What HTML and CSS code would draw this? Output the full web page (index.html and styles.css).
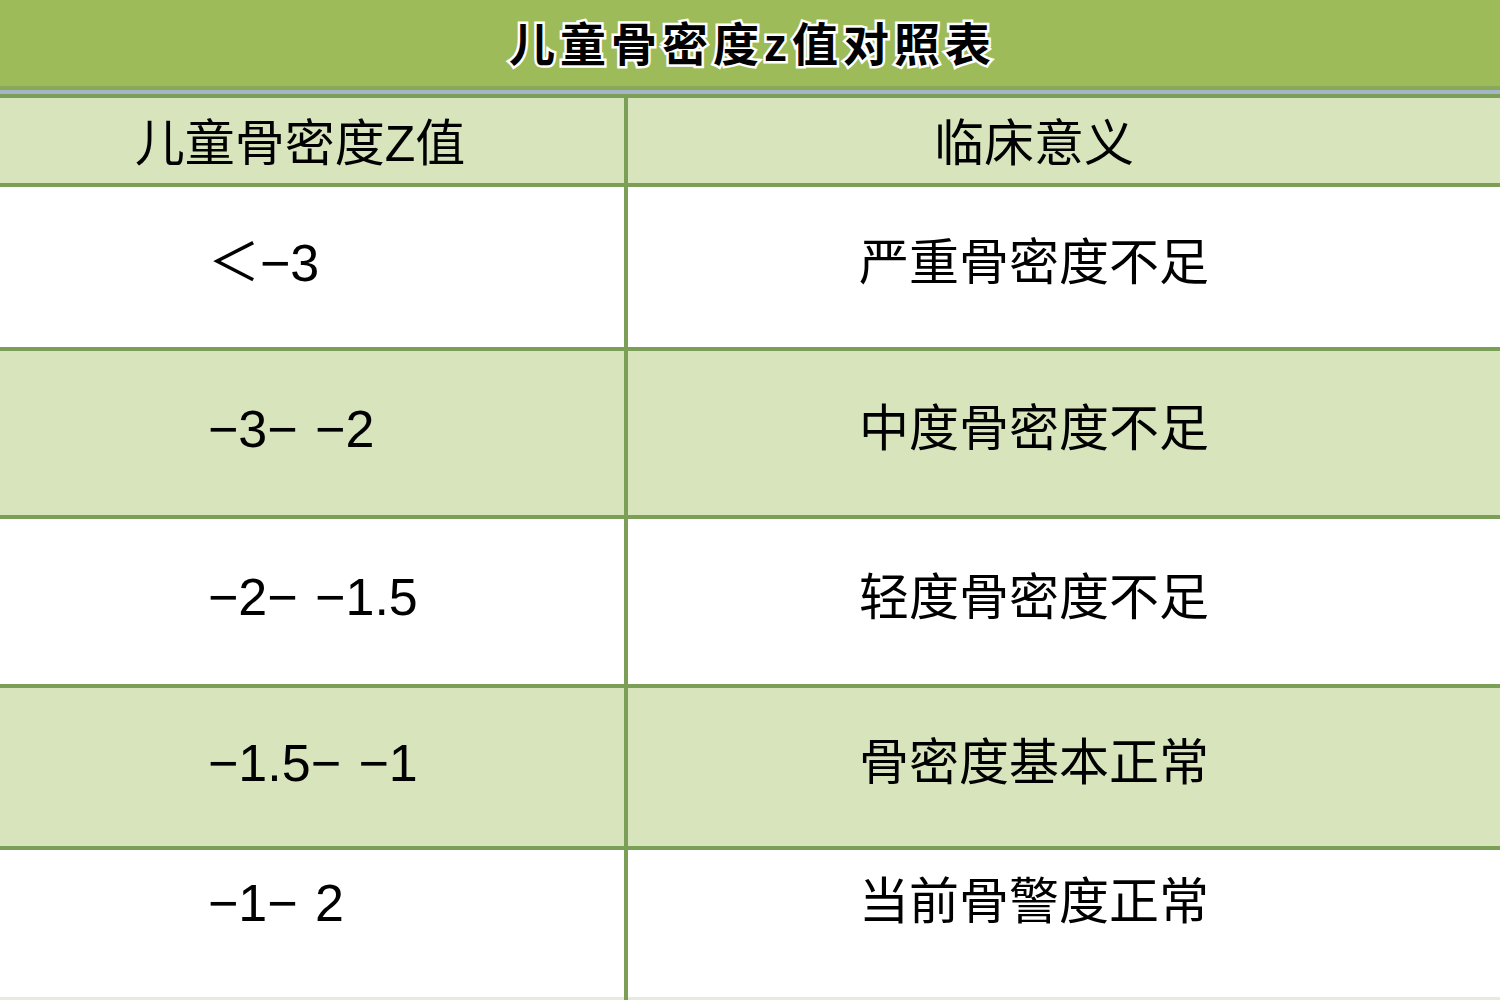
FILE: index.html
```html
<!DOCTYPE html>
<html lang="zh-CN">
<head>
<meta charset="utf-8">
<title>儿童骨密度z值对照表</title>
<link rel="stylesheet" href="styles.css">
</head>
<body>
<div class="page">
  <div class="title"><span class="title-text">儿童骨密度z值对照表</span></div>
  <div class="strip-dark"></div>
  <div class="strip-blue"></div>
  <div class="table">
    <div class="cell head left">儿童骨密度Z值</div>
    <div class="cell head right">临床意义</div>

    <div class="cell plain left num">＜−3</div>
    <div class="cell plain right">严重骨密度不足</div>

    <div class="cell tint left num">−3− −2</div>
    <div class="cell tint right">中度骨密度不足</div>

    <div class="cell plain left num">−2− −1.5</div>
    <div class="cell plain right">轻度骨密度不足</div>

    <div class="cell tint left num">−1.5− −1</div>
    <div class="cell tint right">骨密度基本正常</div>

    <div class="cell plain left num last">−1− 2</div>
    <div class="cell plain right last">当前骨警度正常</div>
  </div>
</div>
</body>
</html>
```

FILE: styles.css
```css
html, body {
  margin: 0;
  padding: 0;
  background: #ffffff;
}

.page {
  width: 1500px;
  height: 1000px;
  overflow: hidden;
  display: flex;
  flex-direction: column;
  font-family: "Liberation Sans", "Noto Sans CJK SC", sans-serif;
  color: #000000;
}

.title {
  height: 86px;
  background: #9dbb59;
  display: flex;
  align-items: center;
  justify-content: center;
  padding-top: 4px;
  box-sizing: border-box;
}

.title-text {
  font-family: "Liberation Sans", "Noto Sans CJK SC", sans-serif;
  font-weight: bold;
  font-size: 46px;
  letter-spacing: 5px;
  line-height: 1;
  color: #000000;
  -webkit-text-stroke: 5px #ffffff;
  paint-order: stroke fill;
  padding-left: 5px;
}

.strip-dark {
  height: 4px;
  background: #88a95a;
}

.strip-blue {
  height: 4px;
  background: #a7b6c6;
}

.table {
  flex: 1;
  display: grid;
  grid-template-columns: 624px 1fr;
  grid-template-rows: 85px 160px 164px 165px 158px 1fr;
  gap: 4px;
  padding-top: 4px;
  background: #7b9f57;
}

.cell {
  display: flex;
  align-items: center;
  font-size: 50px;
  line-height: 1.2;
  padding-bottom: 8px;
  box-sizing: border-box;
}

.head {
  background: #d8e4bc;
  padding-bottom: 0;
  padding-top: 6px;
}

.plain {
  background: #ffffff;
}

.tint {
  background: #d8e4bc;
}

.left {
  padding-left: 208px;
}

.head.left {
  padding-left: 0;
  justify-content: center;
  padding-right: 24px;
}

.right {
  justify-content: center;
  padding-right: 60px;
}

.num {
  font-size: 52px;
  word-spacing: 3px;
}

.last {
  align-items: flex-start;
  padding-top: 22px;
  padding-bottom: 0;
  border-bottom: 3px solid #e6ebe0;
}
```
